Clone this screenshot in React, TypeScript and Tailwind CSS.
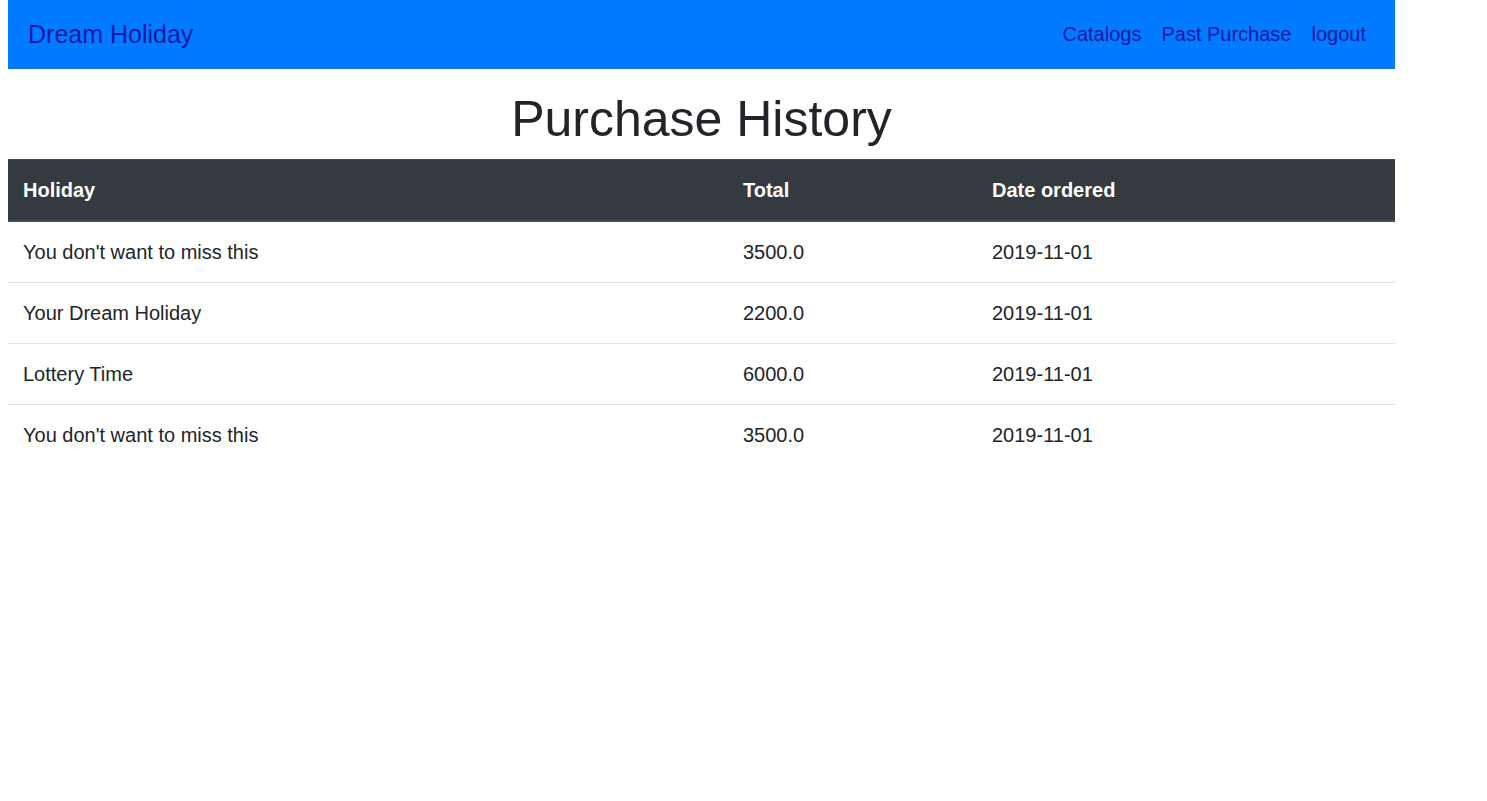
import React from "react";

const rows = [
  { holiday: "You don't want to miss this", total: "3500.0", date: "2019-11-01" },
  { holiday: "Your Dream Holiday", total: "2200.0", date: "2019-11-01" },
  { holiday: "Lottery Time", total: "6000.0", date: "2019-11-01" },
  { holiday: "You don't want to miss this", total: "3500.0", date: "2019-11-01" },
];

export default function App() {
  return (
    <div
      className="min-h-[801px] bg-white text-[#212529]"
      style={{ fontFamily: '"Liberation Sans", Arial, sans-serif' }}
    >
      <div className="mx-[8px] w-[1387px]">
        <nav className="flex h-[69px] items-center justify-between bg-[#007bff] pl-[20px] pr-[19px] border-b border-[#1572d8]">
          <a className="text-[25px] leading-[37px] text-[#1419a3]">Dream Holiday</a>
          <ul className="flex items-center">
            {["Catalogs", "Past Purchase", "logout"].map((l) => (
              <li key={l}>
                <a className="block px-[10px] text-[20px] leading-[30px] text-[#1419a3]">{l}</a>
              </li>
            ))}
          </ul>
        </nav>
        <h1 className="mt-[20px] mb-[10px] text-center text-[50px] font-normal leading-[60px]">
          Purchase History
        </h1>
        <table className="w-full border-collapse text-[20px] leading-[30px]">
          <thead>
            <tr className="bg-[#343a40] text-white">
              <th className="w-[720px] border-t border-b-2 border-[#454d55] p-[15px] text-left font-bold">Holiday</th>
              <th className="w-[249px] border-t border-b-2 border-[#454d55] p-[15px] text-left font-bold">Total</th>
              <th className="border-t border-b-2 border-[#454d55] p-[15px] text-left font-bold">Date ordered</th>
            </tr>
          </thead>
          <tbody>
            {rows.map((r, i) => (
              <tr key={i} className={i === 0 ? "" : "border-t border-[#dee2e6]"}>
                <td className="p-[15px]">{r.holiday}</td>
                <td className="p-[15px]">{r.total}</td>
                <td className="p-[15px]">{r.date}</td>
              </tr>
            ))}
          </tbody>
        </table>
      </div>
    </div>
  );
}
